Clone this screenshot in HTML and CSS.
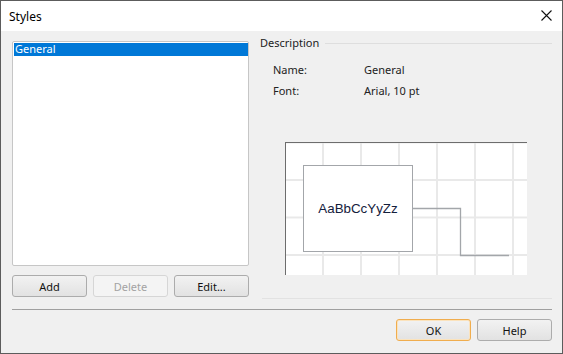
FILE: index.html
```html
<!DOCTYPE html>
<html>
<head>
<meta charset="utf-8">
<link rel="stylesheet" href="styles.css">
</head>
<body>
<div class="window">
  <div class="titlebar">
    <span class="title">Styles</span>
    <svg class="close" width="11" height="11" viewBox="0 0 11 11"><path d="M0.5 0.5 L10.5 10.5 M10.5 0.5 L0.5 10.5" stroke="#111" stroke-width="1.1" fill="none"/></svg>
  </div>
  <div class="content">
    <div class="main">
      <div class="left">
        <div class="list">
          <div class="item selected">General</div>
        </div>
        <div class="btnrow">
          <button class="btn">Add</button>
          <button class="btn disabled">Delete</button>
          <button class="btn">Edit...</button>
        </div>
      </div>
      <div class="right">
        <div class="group-head"><span class="group-title">Description</span><span class="group-line"></span></div>
        <div class="props">
          <div class="prop"><span class="plabel">Name:</span><span class="pvalue">General</span></div>
          <div class="prop"><span class="plabel">Font:</span><span class="pvalue">Arial, 10 pt</span></div>
        </div>
        <div class="preview">
          <div class="node">AaBbCcYyZz</div>
          <svg class="wire" width="240" height="132" viewBox="0 0 240 132"><path d="M126 65.5 H174.5 V112.5 H223" stroke="#a3a6aa" stroke-width="1.3" fill="none"/></svg>
        </div>
        <div class="group-foot"></div>
      </div>
    </div>
    <div class="separator"></div>
    <div class="footer">
      <button class="btn default">OK</button>
      <button class="btn">Help</button>
    </div>
  </div>
</div>
</body>
</html>
```
FILE: styles.css
```css
* { box-sizing: border-box; }
html, body { margin: 0; padding: 0; }
body {
  font-family: "Noto Sans", "Segoe UI", sans-serif;
  font-size: 11px;
  color: #1a1a1a;
}
.window {
  width: 563px;
  height: 354px;
  border: 1px solid #5c5c5c;
  background: #f0f0f0;
  display: flex;
  flex-direction: column;
}
.titlebar {
  height: 30px;
  background: #ffffff;
  display: flex;
  align-items: center;
  justify-content: space-between;
  padding: 0 10px 0 8px;
}
.title {
  font-size: 12px;
  color: #000;
  margin-top: 1px;
}
.close { display: block; margin-top: -2px; }
.content {
  flex: 1;
  padding: 5px 10px 0 11px;
  display: flex;
  flex-direction: column;
}
.main {
  display: flex;
  align-items: flex-start;
  gap: 11px;
}
.left {
  width: 237px;
  padding-top: 5px;
}
.list {
  height: 225px;
  background: #fff;
  border: 1px solid #c6c6c6;
  border-radius: 2px;
  padding: 1px 0 0 1px;
}
.item {
  height: 13px;
  line-height: 12px;
  padding-left: 1px;
  font-size: 11px;
}
.item.selected {
  background: #0078d7;
  color: #fff;
}
.btnrow {
  display: flex;
  gap: 6px;
  margin-top: 9px;
}
.btn {
  width: 75px;
  height: 22px;
  font-family: "Noto Sans", "Segoe UI", sans-serif;
  font-size: 11px;
  color: #111;
  border: 1px solid #acacac;
  border-radius: 3px;
  background: linear-gradient(to bottom, #f2f2f2, #e2e2e2);
  padding: 0;
  margin: 0;
}
.btn.disabled {
  color: #a3a3a3;
  border-color: #d6d6d6;
  background: #f4f4f4;
}
.btn.default {
  border-color: #f0ad4e;
  box-shadow: inset 0 0 0 1px #fbe3bd;
}
.right {
  width: 292px;
}
.group-head {
  height: 14px;
  display: flex;
  align-items: center;
}
.group-title {
  line-height: 14px;
  color: #222;
  margin-right: 6px;
}
.group-line {
  flex: 1;
  height: 1px;
  background: #dedede;
}
.props {
  margin-top: 9px;
  padding-left: 13px;
}
.prop {
  height: 21px;
  line-height: 21px;
  display: flex;
  color: #222;
}
.plabel { width: 91px; }
.preview {
  position: relative;
  margin: 41px 0 0 25px;
  width: 242px;
  height: 133px;
  border-top: 1px solid #6d6d6d;
  border-left: 1px solid #6d6d6d;
  background-color: #fff;
  background-image:
    linear-gradient(to right, #e9e9e9 2px, transparent 2px),
    linear-gradient(to bottom, #e9e9e9 2px, transparent 2px);
  background-size: 38px 38px, 38px 37.5px;
  background-position: 36px 0, 0 36px;
}
.node {
  position: absolute;
  left: 17px;
  top: 22px;
  width: 110px;
  height: 87px;
  background: #fff;
  border: 1px solid #a3a6aa;
  display: flex;
  align-items: center;
  justify-content: center;
  font-family: "Liberation Sans", Arial, sans-serif;
  font-size: 13.33px;
  color: #14203c;
}
.wire {
  position: absolute;
  left: 0;
  top: 0;
}
.group-foot {
  margin: 23px 0 0 2px;
  height: 1px;
  background: #e2e2e2;
}
.separator {
  margin-top: 10px;
  height: 1px;
  background: #a0a0a0;
}
.footer {
  display: flex;
  justify-content: flex-end;
  gap: 6px;
  margin-top: 9px;
}
```
